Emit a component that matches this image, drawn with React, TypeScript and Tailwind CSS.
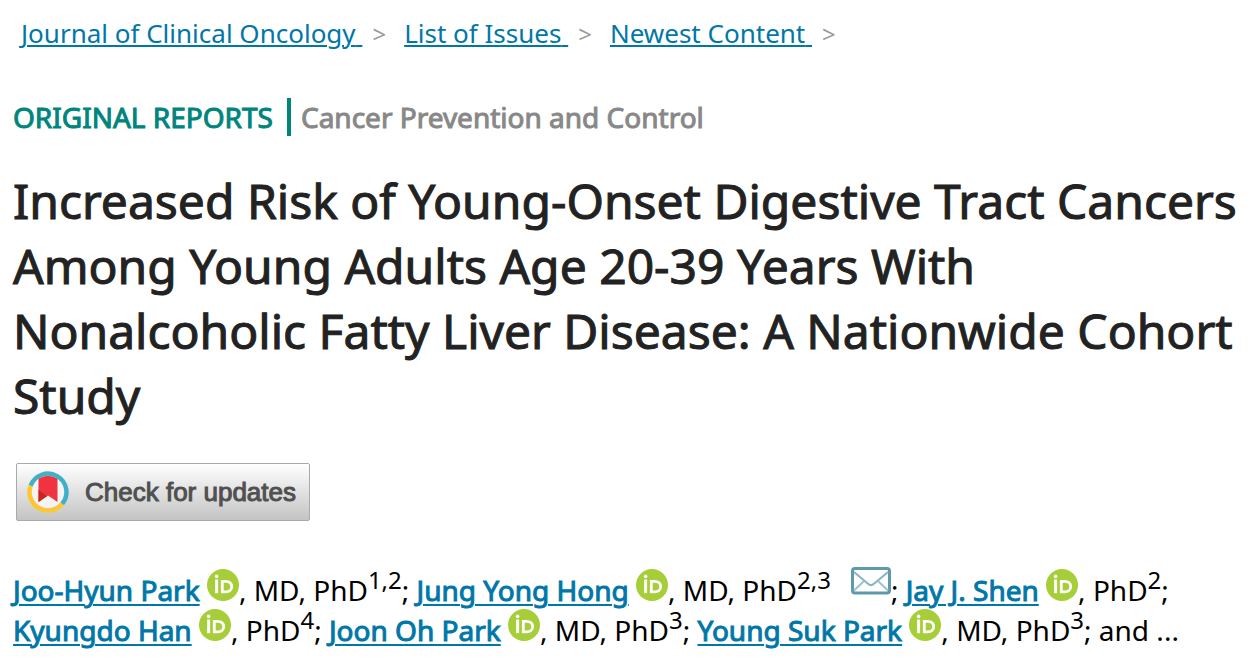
import { Fragment } from 'react'

interface Author {
  name: string
  degrees: string
  affiliations: string
  corresponding?: boolean
}

const breadcrumbs = ['Journal of Clinical Oncology', 'List of Issues', 'Newest Content']

const authors: Author[] = [
  { name: 'Joo-Hyun Park', degrees: 'MD, PhD', affiliations: '1,2' },
  { name: 'Jung Yong Hong', degrees: 'MD, PhD', affiliations: '2,3', corresponding: true },
  { name: 'Jay J. Shen', degrees: 'PhD', affiliations: '2' },
  { name: 'Kyungdo Han', degrees: 'PhD', affiliations: '4' },
  { name: 'Joon Oh Park', degrees: 'MD, PhD', affiliations: '3' },
  { name: 'Young Suk Park', degrees: 'MD, PhD', affiliations: '3' },
]

function OrcidIcon() {
  return (
    <svg viewBox="0 0 32 32" className="inline-block size-8 align-baseline" role="img" aria-label="ORCID">
      <circle cx="16" cy="16" r="16" fill="#a6ce39" />
      <circle cx="9.6" cy="7.4" r="1.8" fill="#fff" />
      <path d="M9.6 10.5V24.2" stroke="#fff" strokeWidth="3" />
      <path d="M15.3 12.3H18.6C22.6 12.3 24.7 14.7 24.7 17.7C24.7 20.9 22.3 22.9 18.8 22.9H15.3Z" fill="none" stroke="#fff" strokeWidth="2.8" />
    </svg>
  )
}

function MailIcon() {
  return (
    <svg viewBox="0 0 40 28" className="-mt-2 inline-block h-7 w-10 align-[6px]" role="img" aria-label="Email">
      <rect x="1.5" y="1.5" width="37" height="24.5" rx="2.5" fill="#fff" stroke="#5b9bab" strokeWidth="3" />
      <path d="M3 5L17 16.8Q20 19.5 23 16.8L37 5" fill="none" stroke="#86b5c0" strokeWidth="2" />
      <path d="M3 23.5L13 14M37 23.5L27 14" fill="none" stroke="#9cc3cc" strokeWidth="2" />
    </svg>
  )
}

// Crossmark logo: split ring with a folded bookmark inside
function CrossmarkIcon() {
  return (
    <svg viewBox="0 0 42 42" className="size-[42px]" aria-hidden="true">
      <circle cx="21" cy="21" r="16" fill="#f4f4f4" />
      <path d="M11.5 7.5Q21 2 30.5 7.5V31L21 24.5L11.5 31Z" fill="#ef3340" />
      <path d="M11.5 18.8L20 25.2L11.5 31Z" fill="#c6281c" />
      <path d="M3.6 14.7A18.5 18.5 0 1 1 35.2 32.9" fill="none" stroke="#3eb1c8" strokeWidth="4.4" />
      <path d="M35.2 32.9A18.5 18.5 0 0 1 3.6 14.7" fill="none" stroke="#ffc72c" strokeWidth="4.4" />
    </svg>
  )
}

export default function App() {
  return (
    <main className="min-h-screen bg-white pt-[15px] pl-[13px] font-['Noto_Sans',sans-serif] text-black">
      <nav aria-label="Breadcrumb" className="pl-2 text-[26px] leading-9 text-[#999]">
        {breadcrumbs.map((label) => (
          <Fragment key={label}>
            <a href="#" className="text-[#0077a8] underline decoration-2 underline-offset-2">
              {label}&nbsp;
            </a>
            <span className="mr-[18px] ml-2.5 text-[24px]">&gt;</span>
          </Fragment>
        ))}
      </nav>

      <div className="mt-[46px] flex h-[38px] items-center text-[28px] leading-[38px] [-webkit-text-stroke:1px_currentColor]">
        <span className="text-[#00857d]">ORIGINAL REPORTS</span>
        <span className="mr-2.5 ml-3.5 h-full w-1 bg-[#00857d]" />
        <span className="text-[#888]">Cancer Prevention and Control</span>
      </div>

      <h1 className="mt-8 text-[48px] leading-[65px] text-[#222] [-webkit-text-stroke:1px_currentColor]">
        Increased Risk of Young-Onset Digestive Tract Cancers Among Young Adults Age 20-39 Years With
        Nonalcoholic Fatty Liver Disease: A Nationwide Cohort Study
      </h1>

      <button
        type="button"
        className="mt-[35px] ml-[3px] flex h-[58px] w-[294px] items-center gap-4 rounded-xs border border-[#aaa] bg-linear-to-b from-white to-[#c4c4c4] pl-2.5 font-['Liberation_Sans',sans-serif] text-[26px] text-[#505050]"
      >
        <CrossmarkIcon />
        <span className="whitespace-nowrap [-webkit-text-stroke:1px_currentColor]">Check for updates</span>
      </button>

      <p className="mt-12 text-[28px] leading-[38px]">
        {authors.map((author) => (
          <Fragment key={author.name}>
            <a
              href="#"
              className="text-[#0077a8] underline decoration-2 underline-offset-[3px] [-webkit-text-stroke:1px_currentColor]"
            >
              {author.name}
            </a>{' '}
            <a href="#">
              <OrcidIcon />
            </a>
            , {author.degrees}
            <sup className="text-[24px]">{author.affiliations}</sup>
            {author.corresponding && (
              <a href="#" className="ml-5">
                <MailIcon />
              </a>
            )}
            ;{' '}
          </Fragment>
        ))}
        and ...
      </p>
    </main>
  )
}
